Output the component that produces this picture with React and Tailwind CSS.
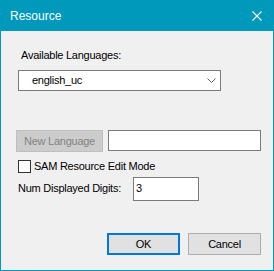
export default function App() {
  return (
    <div
      className="w-[274px] h-[271px] flex flex-col bg-[#0099bc] px-px pb-px text-[11px] leading-[13px] text-black"
      style={{ fontFamily: "'Liberation Sans', Arial, sans-serif" }}
    >
      {/* Title bar */}
      <div className="h-[31px] flex items-center justify-between pl-[9px] pr-[10px] shrink-0">
        <span className="text-white text-[12px] leading-[14px]">Resource</span>
        <svg width="10" height="10" viewBox="0 0 10 10" className="mr-px">
          <path d="M0.5 0.5 L9.5 9.5 M9.5 0.5 L0.5 9.5" stroke="#ffffff" strokeWidth="1.1" />
        </svg>
      </div>

      {/* Body */}
      <div className="flex-1 bg-[#f0f0f0] flex flex-col tracking-[-0.25px]">
        <div className="mt-[18px] pl-[20px]">Available Languages:</div>

        {/* Combo box */}
        <div className="mt-[8px] ml-[17px] w-[203px] h-[21px] bg-white border border-[#7a7a7a] flex items-center justify-between pl-[13px] pr-[4px]">
          <span>english_uc</span>
          <svg width="9" height="5" viewBox="0 0 9 5">
            <path d="M0.5 0.5 L4.5 4.5 L8.5 0.5" stroke="#606060" strokeWidth="1" fill="none" />
          </svg>
        </div>

        {/* New language row */}
        <div className="mt-[39px] ml-[15px] flex items-start gap-[5px]">
          <div className="w-[87px] h-[22px] bg-[#cccccc] border border-[#bfbfbf] flex items-center justify-center text-[#838383]">
            New Language
          </div>
          <div className="w-[153px] h-[21px] bg-white border border-[#7a7a7a]" />
        </div>

        {/* Checkbox */}
        <div className="mt-[8px] ml-[17px] flex items-center gap-[3px]">
          <div className="w-[13px] h-[13px] bg-white border border-[#333333]" />
          <span>SAM Resource Edit Mode</span>
        </div>

        {/* Digits */}
        <div className="mt-[4px] ml-[17px] flex items-start">
          <span className="w-[115px] mt-[5px]">Num Displayed Digits:</span>
          <div className="w-[66px] h-[24px] bg-white border border-[#7a7a7a] pl-[2px] pt-[4px]">3</div>
        </div>

        {/* Buttons */}
        <div className="mt-[32px] ml-[106px] flex gap-[8px]">
          <div className="w-[73px] h-[22px] bg-[#e1e1e1] border-2 border-[#0078d7] flex items-center justify-center">
            OK
          </div>
          <div className="w-[73px] h-[22px] bg-[#e1e1e1] border border-[#adadad] flex items-center justify-center">
            Cancel
          </div>
        </div>
      </div>
    </div>
  );
}
